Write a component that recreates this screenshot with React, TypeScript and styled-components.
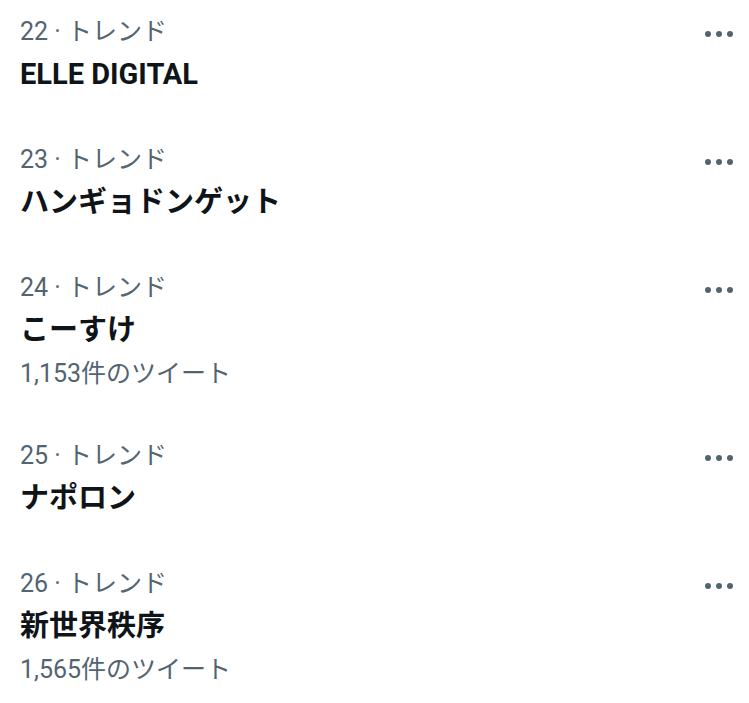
import styled, { createGlobalStyle } from 'styled-components'

const Global = createGlobalStyle`
body {
  margin: 0;
  background: #ffffff;
  font-family: Roboto, "Noto Sans CJK JP", sans-serif;
}
`

const List = styled.div`
display: flex;
flex-direction: column;
`
const Item = styled.div`
display: flex;
align-items: flex-start;
padding: 16px 16px 34px 20px;
`
const Body = styled.div`
flex: 1;
display: flex;
flex-direction: column;
`
const Meta = styled.div`
font-size: 25px;
line-height: 32px;
color: #536471;
`
const Title = styled.div`
margin-top: 6px;
font-size: 29px;
line-height: 40px;
font-weight: 700;
color: #0f1419;
`
const Count = styled.div`
margin-top: 8px;
font-size: 25px;
line-height: 32px;
color: #536471;
`
const More = styled.div`
display: flex;
gap: 5px;
padding-top: 15px;
`
const Dot = styled.span`
width: 6px;
height: 6px;
border-radius: 50%;
background: #536471;
`

const trends = [
    { rank: 22, name: 'ELLE DIGITAL' },
    { rank: 23, name: 'ハンギョドンゲット' },
    { rank: 24, name: 'こーすけ', count: '1,153件のツイート' },
    { rank: 25, name: 'ナポロン' },
    { rank: 26, name: '新世界秩序', count: '1,565件のツイート' },
]

const App = () => {
    return (
        <List>
            <Global />
            {trends.map(t => (
                <Item key={t.rank}>
                    <Body>
                        <Meta>{t.rank} · トレンド</Meta>
                        <Title>{t.name}</Title>
                        {t.count && <Count>{t.count}</Count>}
                    </Body>
                    <More>
                        <Dot /><Dot /><Dot />
                    </More>
                </Item>
            ))}
        </List>
    )
}

export default App
